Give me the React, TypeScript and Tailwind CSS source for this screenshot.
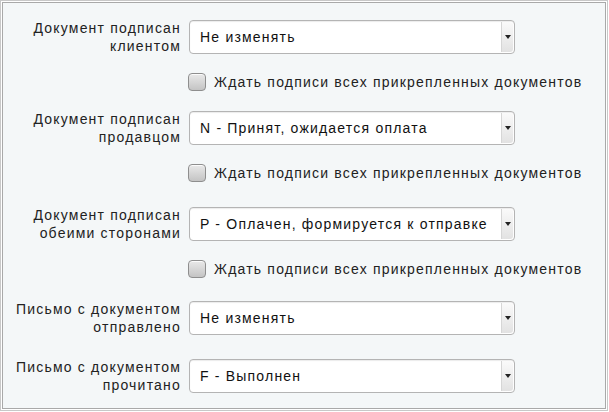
const font = { fontFamily: '"Liberation Sans", Arial, sans-serif' }

type Row = { label: [string, string]; value: string; wait?: boolean; gap: string }

const rows: Row[] = [
  { label: ['Документ подписан', 'клиентом'], value: 'Не изменять', wait: true, gap: 'mb-[22px]' },
  {
    label: ['Документ подписан', 'продавцом'],
    value: 'N - Принят, ожидается оплата',
    wait: true,
    gap: 'mb-[27px]',
  },
  {
    label: ['Документ подписан', 'обеими сторонами'],
    value: 'P - Оплачен, формируется к отправке',
    wait: true,
    gap: 'mb-[25px]',
  },
  { label: ['Письмо с документом', 'отправлено'], value: 'Не изменять', gap: 'mb-[24px]' },
  { label: ['Письмо с документом', 'прочитано'], value: 'F - Выполнен', gap: 'mb-0' },
]

const Select = ({ value }: { value: string }) => (
  <div className="flex h-[34px] w-[326px] shrink-0 items-stretch rounded-[4px] border border-[#b4b4b4] bg-white shadow-[inset_0_1px_1px_rgba(0,0,0,0.08)]">
    <div className="flex flex-1 items-center truncate pl-[10px] text-[14px] tracking-[1.2px] text-[#111]">
      {value}
    </div>
    <div className="my-[1px] mr-[1px] flex w-[12px] flex-col items-center justify-center rounded-r-[3px] border-l border-[#d6d6d6] bg-gradient-to-b from-[#fafafa] to-[#e2e2e2]">
      <svg width="6" height="4" viewBox="0 0 6 4">
        <path d="M0 0h6L3 4z" fill="#222" />
      </svg>
    </div>
  </div>
)

const Checkbox = () => (
  <span className="inline-block size-[18px] shrink-0 rounded-[4px] border border-[#8e8e8e] bg-gradient-to-b from-[#e9e9e9] to-[#c4c4c4] shadow-[inset_0_1px_0_rgba(255,255,255,0.8)]" />
)

export default function App() {
  return (
    <div style={font} className="h-[412px] w-[609px] bg-white">
      <div className="h-[411px] w-[608px] border border-[#c8c8c8] p-px">
        <div className="h-full w-full border border-[#a9a9a9] bg-[#f4f7f8] pt-[17px]">
          {rows.map((row, i) => (
            <div key={i} className={row.gap}>
              <div className="flex h-[34px] items-center">
                <div className="w-[186px] shrink-0 pr-[8px] text-right text-[14px] leading-[18px] tracking-[1.2px] whitespace-nowrap text-[#222]">
                  <div>{row.label[0]}</div>
                  <div>{row.label[1]}</div>
                </div>
                <Select value={row.value} />
              </div>
              {row.wait && (
                <label className="mt-[19px] -mb-[2px] ml-[185px] flex h-[18px] items-center gap-[8px] text-[14px] tracking-[1.2px] whitespace-nowrap text-[#222]">
                  <Checkbox />
                  <span>Ждать подписи всех прикрепленных документов</span>
                </label>
              )}
            </div>
          ))}
        </div>
      </div>
    </div>
  )
}
